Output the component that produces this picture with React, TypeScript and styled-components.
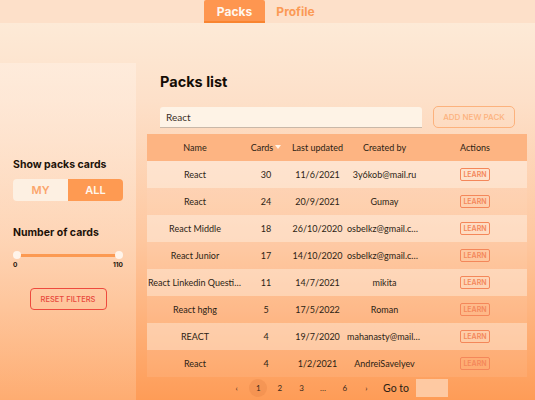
import styled, { createGlobalStyle } from "styled-components";

const GlobalStyle = createGlobalStyle`
  html, body {
    margin: 0;
    padding: 0;
    width: 535px;
    height: 400px;
    overflow: hidden;
  }
  body {
    font-family: "Lato", "Open Sans", sans-serif;
  }
`;

const heading = `"Inter", "DejaVu Sans", sans-serif`;

const Page = styled.div`
  width: 535px;
  height: 400px;
  display: flex;
  flex-direction: column;
  background: linear-gradient(180deg, #fdeddb 0%, #fde0c9 25%, #fec79f 60%, #fe9c57 100%);
`;

const Header = styled.div`
  height: 23px;
  flex-shrink: 0;
  background: #fde0c9;
  display: flex;
  justify-content: center;
`;

const TabRow = styled.div`
  display: flex;
  margin-right: 5px;
`;

const Tab = styled.div<{ $active?: boolean }>`
  width: 61px;
  height: 23px;
  box-sizing: border-box;
  display: flex;
  align-items: center;
  justify-content: center;
  font-family: ${heading};
  font-weight: 700;
  font-size: 12px;
  color: ${(p) => (p.$active ? "#fff7ef" : "#fb9a55")};
  background: ${(p) => (p.$active ? "#fe9650" : "transparent")};
  border-bottom: 2px solid ${(p) => (p.$active ? "#f98530" : "transparent")};
  border-radius: 2px 2px 0 0;
  padding-top: 1px;
`;

const Body = styled.div`
  flex: 1;
  display: flex;
  padding-top: 40px;
`;

const Sidebar = styled.aside`
  width: 136px;
  flex-shrink: 0;
  background: linear-gradient(180deg, rgba(255, 240, 228, 0.55), rgba(255, 220, 190, 0.25));
  box-sizing: border-box;
  padding: 95px 13px 0 13px;
  display: flex;
  flex-direction: column;
`;

const SideTitle = styled.div`
  font-family: ${heading};
  font-weight: 700;
  font-size: 10.5px;
  color: #1c1208;
  margin-bottom: 8px;
`;

const Toggle = styled.div`
  display: flex;
  width: 110px;
  height: 22px;
  border-radius: 4px;
  overflow: hidden;
  margin-bottom: 25px;
`;

const ToggleItem = styled.div<{ $active?: boolean }>`
  flex: 1;
  display: flex;
  align-items: center;
  justify-content: center;
  font-family: ${heading};
  font-weight: 600;
  font-size: 11px;
  color: ${(p) => (p.$active ? "#fff6ec" : "#fba56b")};
  background: ${(p) => (p.$active ? "#fe9a52" : "#fdf0e2")};
`;

const Slider = styled.div`
  position: relative;
  margin: 7px 4px 0 4px;
  height: 3px;
  background: #fc9a52;
  border-radius: 2px;
`;

const Thumb = styled.span<{ $side: "left" | "right" }>`
  position: absolute;
  top: -3px;
  ${(p) => (p.$side === "left" ? "left: -4px;" : "right: -4px;")}
  width: 8px;
  height: 8px;
  border-radius: 50%;
  background: #fff4ea;
`;

const SliderLabels = styled.div`
  display: flex;
  justify-content: space-between;
  margin-top: 4px;
  font-family: ${heading};
  font-weight: 700;
  font-size: 6.5px;
  color: #1c1208;
`;

const ResetButton = styled.button`
  align-self: center;
  margin-top: 19px;
  width: 77px;
  height: 22px;
  border: 1.5px solid #ee4a3e;
  border-radius: 4px;
  background: transparent;
  font-family: ${heading};
  font-size: 7.5px;
  font-weight: 500;
  color: #e8483c;
  padding: 0;
`;

const Main = styled.main`
  flex: 1;
  display: flex;
  flex-direction: column;
  padding: 10px 8px 0 11px;
`;

const Title = styled.h1`
  margin: 0 0 0 13px;
  font-family: ${heading};
  font-weight: 700;
  font-size: 14.5px;
  color: #140c05;
  line-height: 18px;
`;

const Toolbar = styled.div`
  display: flex;
  align-items: center;
  margin: 15px 0 6px 13px;
  gap: 11px;
`;

const Search = styled.div`
  width: 262px;
  height: 21px;
  box-sizing: border-box;
  background: #fef3e6;
  border-radius: 3px 3px 0 0;
  border-bottom: 1.5px solid #c9b8a8;
  font-family: "Lato", sans-serif;
  font-size: 10px;
  color: #3a2f28;
  display: flex;
  align-items: center;
  padding-left: 6px;
`;

const AddButton = styled.button`
  width: 82px;
  height: 22px;
  border: 1px solid #fcb27d;
  border-radius: 5px;
  background: transparent;
  font-family: ${heading};
  font-size: 8px;
  font-weight: 500;
  color: #fcb27d;
  padding: 0;
`;

const Table = styled.div`
  width: 380px;
  display: flex;
  flex-direction: column;
`;

const cols = "96px 46px 57px 77px 104px";

const HeadRow = styled.div`
  display: grid;
  grid-template-columns: ${cols};
  height: 27px;
  align-items: center;
  background: #fdb482;
  font-size: 9px;
  color: #2c1e14;
`;

const Row = styled.div<{ $odd: boolean }>`
  display: grid;
  grid-template-columns: ${cols};
  height: 27px;
  align-items: center;
  background: ${(p) => (p.$odd ? "rgba(255, 248, 240, 0.42)" : "rgba(255, 240, 225, 0.1)")};
  font-size: 9px;
  color: #2c1e14;
`;

const Cell = styled.div`
  text-align: center;
  white-space: nowrap;
  overflow: hidden;
  text-overflow: ellipsis;
  padding: 0 1px;
`;

const SortArrow = styled.span`
  display: inline-block;
  margin-left: 2px;
  width: 0;
  height: 0;
  border-left: 3px solid transparent;
  border-right: 3px solid transparent;
  border-top: 4px solid #fff3e8;
  vertical-align: 2px;
`;

const LearnButton = styled.span`
  display: inline-block;
  border: 1px solid #f4875a;
  border-radius: 2px;
  padding: 1px 2px;
  font-family: ${heading};
  font-size: 7px;
  font-weight: 600;
  color: #f4875a;
  line-height: 9px;
`;

const Pagination = styled.div`
  width: 380px;
  display: flex;
  align-items: center;
  justify-content: center;
  height: 22px;
  font-size: 8px;
  color: #3a2a1c;
`;

const PageItem = styled.span<{ $active?: boolean }>`
  width: 18px;
  height: 18px;
  border-radius: 50%;
  margin: 0 1.8px;
  display: flex;
  align-items: center;
  justify-content: center;
  background: ${(p) => (p.$active ? "rgba(220, 120, 60, 0.25)" : "transparent")};
`;

const GoTo = styled.span`
  font-size: 10.5px;
  margin: 0 7px 0 6px;
  color: #2c1e14;
`;

const GoInput = styled.span`
  width: 32px;
  height: 18px;
  background: #fec9a2;
`;

const rows = [
  ["React", "30", "11/6/2021", "3y6kob@mail.ru"],
  ["React", "24", "20/9/2021", "Gumay"],
  ["React Middle", "18", "26/10/2020", "osbelkz@gmail.com"],
  ["React Junior", "17", "14/10/2020", "osbelkz@gmail.com"],
  ["React Linkedin Questions", "11", "14/7/2021", "mikita"],
  ["React hghg", "5", "17/5/2022", "Roman"],
  ["REACT", "4", "19/7/2020", "mahanasty@mail.ru"],
  ["React", "4", "1/2/2021", "AndreiSavelyev"],
];

export default function App() {
  return (
    <Page>
      <GlobalStyle />
      <Header>
        <TabRow>
          <Tab $active>Packs</Tab>
          <Tab>Profile</Tab>
        </TabRow>
      </Header>
      <Body>
        <Sidebar>
          <SideTitle>Show packs cards</SideTitle>
          <Toggle>
            <ToggleItem>MY</ToggleItem>
            <ToggleItem $active>ALL</ToggleItem>
          </Toggle>
          <SideTitle>Number of cards</SideTitle>
          <Slider>
            <Thumb $side="left" />
            <Thumb $side="right" />
          </Slider>
          <SliderLabels>
            <span>0</span>
            <span>110</span>
          </SliderLabels>
          <ResetButton>RESET FILTERS</ResetButton>
        </Sidebar>
        <Main>
          <Title>Packs list</Title>
          <Toolbar>
            <Search>React</Search>
            <AddButton>ADD NEW PACK</AddButton>
          </Toolbar>
          <Table>
            <HeadRow>
              <Cell>Name</Cell>
              <Cell>
                Cards<SortArrow />
              </Cell>
              <Cell>Last updated</Cell>
              <Cell>Created by</Cell>
              <Cell>Actions</Cell>
            </HeadRow>
            {rows.map((r, i) => (
              <Row key={i} $odd={i % 2 === 0}>
                <Cell>{r[0]}</Cell>
                <Cell>{r[1]}</Cell>
                <Cell>{r[2]}</Cell>
                <Cell>{r[3]}</Cell>
                <Cell>
                  <LearnButton>LEARN</LearnButton>
                </Cell>
              </Row>
            ))}
          </Table>
          <Pagination>
            <PageItem>‹</PageItem>
            <PageItem $active>1</PageItem>
            <PageItem>2</PageItem>
            <PageItem>3</PageItem>
            <PageItem>…</PageItem>
            <PageItem>6</PageItem>
            <PageItem>›</PageItem>
            <GoTo>Go to</GoTo>
            <GoInput />
          </Pagination>
        </Main>
      </Body>
    </Page>
  );
}
